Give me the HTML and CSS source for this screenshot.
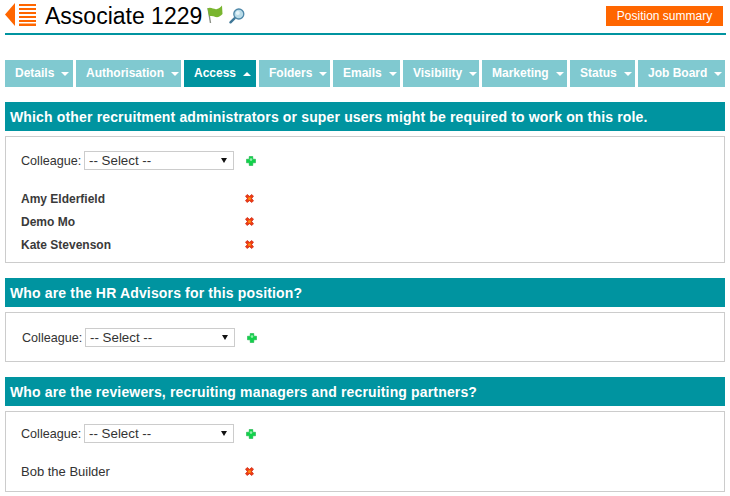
FILE: index.html
```html
<!DOCTYPE html>
<html lang="en">
<head>
<meta charset="utf-8">
<title>Associate 1229</title>
<link rel="stylesheet" href="styles.css">
</head>
<body>
<svg class="sprite" width="0" height="0">
  <symbol id="add" viewBox="0 0 10 10">
    <path d="M3.2 0.5h3.6v2.7h2.7v3.6h-2.7v2.7h-3.6v-2.7h-2.7v-3.6h2.7z" fill="#10d24a" stroke="#0aa83a" stroke-width="0.5"/>
    <circle cx="5" cy="3.6" r="1.3" fill="#8df0a8"/>
  </symbol>
  <symbol id="del" viewBox="0 0 10 10">
    <path d="M2.5 0.5L5 2.6L7.5 0.5L9.5 2.5L7.4 5L9.5 7.5L7.5 9.5L5 7.4L2.5 9.5L0.5 7.5L2.6 5L0.5 2.5Z" fill="#ee3d12" stroke="#c81c0c" stroke-width="0.7"/>
    <circle cx="5" cy="5" r="1.7" fill="#ff8a10"/>
  </symbol>
</svg>
<div class="page">
  <header class="head">
    <svg class="icon-back" width="32" height="24" viewBox="0 0 32 24">
      <path d="M10 0V23L0 11.5Z" fill="#ff6600"/>
      <g fill="#ff6600">
        <rect x="14" y="1" width="17" height="2"/>
        <rect x="14" y="5" width="17" height="2"/>
        <rect x="14" y="9" width="17" height="2"/>
        <rect x="14" y="13" width="17" height="2"/>
        <rect x="14" y="17" width="17" height="2"/>
        <rect x="14" y="20.5" width="17" height="2.5"/>
      </g>
    </svg>
    <h1 class="title">Associate 1229</h1>
    <svg class="icon-flag" width="17" height="19" viewBox="0 0 17 19">
      <path d="M2 3L4.5 18" stroke="#8a8f85" stroke-width="1.4" fill="none"/>
      <path d="M1.5 3.5C5 1.5 8 5 11 4C13 3.5 14.5 2.5 16 0.5L16.5 9C14.5 11.5 12 12.5 9.5 12C7.5 11.5 5.5 10.5 3.2 11.5Z" fill="#79b52f"/>
    </svg>
    <svg class="icon-search" width="16" height="16" viewBox="0 0 16 16">
      <circle cx="9.8" cy="6" r="5" fill="#b9dbe8" stroke="#4d87a8" stroke-width="1.3"/>
      <circle cx="8.8" cy="5" r="2" fill="#e4f3f8"/>
      <path d="M5.5 10.3L1.5 14.3" stroke="#3f7797" stroke-width="2.4" stroke-linecap="round"/>
    </svg>
    <a class="summary">Position summary</a>
  </header>

  <nav class="tabs">
    <a class="tab tab-details">Details<i class="caret"></i></a>
    <a class="tab tab-auth">Authorisation<i class="caret"></i></a>
    <a class="tab tab-access active">Access<i class="caret up"></i></a>
    <a class="tab tab-folders">Folders<i class="caret"></i></a>
    <a class="tab tab-emails">Emails<i class="caret"></i></a>
    <a class="tab tab-vis">Visibility<i class="caret"></i></a>
    <a class="tab tab-mkt">Marketing<i class="caret"></i></a>
    <a class="tab tab-status">Status<i class="caret"></i></a>
    <a class="tab tab-job">Job Board<i class="caret"></i></a>
  </nav>

  <section class="section">
    <h2 class="section-head">Which other recruitment administrators or super users might be required to work on this role.</h2>
    <div class="panel panel-first">
      <div class="field">
        <label class="label">Colleague:</label>
        <span class="select-wrap"><select class="select"><option>-- Select --</option></select></span>
        <svg class="icon-add" width="10" height="10"><use href="#add"/></svg>
      </div>
      <ul class="people">
        <li class="person"><span class="name">Amy Elderfield</span><svg class="icon-del" width="9" height="9"><use href="#del"/></svg></li>
        <li class="person"><span class="name">Demo Mo</span><svg class="icon-del" width="9" height="9"><use href="#del"/></svg></li>
        <li class="person"><span class="name">Kate Stevenson</span><svg class="icon-del" width="9" height="9"><use href="#del"/></svg></li>
      </ul>
    </div>
  </section>

  <section class="section">
    <h2 class="section-head">Who are the HR Advisors for this position?</h2>
    <div class="panel panel-second">
      <div class="field">
        <label class="label">Colleague:</label>
        <span class="select-wrap"><select class="select"><option>-- Select --</option></select></span>
        <svg class="icon-add" width="10" height="10"><use href="#add"/></svg>
      </div>
    </div>
  </section>

  <section class="section">
    <h2 class="section-head">Who are the reviewers, recruiting managers and recruiting partners?</h2>
    <div class="panel panel-third">
      <div class="field">
        <label class="label">Colleague:</label>
        <span class="select-wrap"><select class="select"><option>-- Select --</option></select></span>
        <svg class="icon-add" width="10" height="10"><use href="#add"/></svg>
      </div>
      <ul class="people">
        <li class="person"><span class="name name-plain">Bob the Builder</span><svg class="icon-del" width="9" height="9"><use href="#del"/></svg></li>
      </ul>
    </div>
  </section>
</div>
</body>
</html>
```

FILE: styles.css
```css
* { box-sizing: border-box; }
html, body { margin: 0; padding: 0; background: #fff; }
body { font-family: "Liberation Sans", Arial, sans-serif; color: #333; overflow: hidden; }
.sprite { display: block; height: 0; }
.page { width: 730px; padding: 0 5px; }

.head {
  display: flex;
  align-items: flex-start;
  height: 35px;
  width: 721px;
  padding-top: 3px;
  border-bottom: 2px solid #0094a0;
}
.icon-back { flex: none; }
.title {
  margin: 1px 0 0 8px;
  font-size: 23px;
  line-height: 24px;
  font-weight: normal;
  color: #000;
  white-space: nowrap;
}
.icon-flag { margin: 2px 0 0 4px; flex: none; }
.icon-search { margin: 5px 0 0 6px; flex: none; }
.summary {
  margin: 3px 3px 0 auto;
  width: 117px;
  height: 20px;
  background: #ff6600;
  color: #fff;
  font-size: 12px;
  line-height: 20px;
  text-align: center;
}

.tabs { display: flex; gap: 3px; margin-top: 25px; }
.tab {
  display: flex;
  align-items: center;
  height: 27px;
  padding: 0 0 2px 10px;
  background: #80c9d0;
  color: #fff;
  font-size: 12px;
  font-weight: bold;
  white-space: nowrap;
}
.tab.active { background: #0094a0; }
.tab-details { width: 68px; }
.tab-auth { width: 105px; }
.tab-access { width: 72px; }
.tab-folders { width: 71px; }
.tab-emails { width: 67px; }
.tab-vis { width: 76px; }
.tab-mkt { width: 85px; }
.tab-status { width: 65px; }
.tab-job { width: 87px; }
.caret {
  margin: 3px 0 0 7px;
  width: 0;
  height: 0;
  border-left: 4px solid transparent;
  border-right: 4px solid transparent;
  border-top: 4px solid #fff;
}
.caret.up { border-top: 0; border-bottom: 4px solid #fff; margin-top: 2px; }

.section { margin-top: 15px; width: 720px; }
.section-head {
  margin: 0;
  height: 29px;
  padding-left: 5px;
  background: #0094a0;
  color: #fff;
  font-size: 14px;
  letter-spacing: 0.155px;
  line-height: 30px;
  font-weight: bold;
  white-space: nowrap;
}
.panel {
  margin-top: 5px;
  border: 1px solid #ccc;
}
.panel-first { padding: 14px 15px 6px; }
.panel-second { padding: 15px 16px 14px; }
.panel-third { padding: 12px 15px 8px; }
.field { display: flex; align-items: center; height: 19px; }
.label { width: 63px; font-size: 12.6px; color: #333; white-space: nowrap; }
.select-wrap { position: relative; display: block; width: 150px; height: 19px; }
.select-wrap::after {
  content: "";
  position: absolute;
  right: 7px;
  top: 7px;
  border-left: 3px solid transparent;
  border-right: 3px solid transparent;
  border-top: 5px solid #111;
  pointer-events: none;
}
.select {
  display: block;
  width: 150px;
  height: 19px;
  padding: 0 0 0 4px;
  border: 1px solid #ccc;
  background: #fff;
  color: #333;
  font-family: "Liberation Sans", Arial, sans-serif;
  font-size: 13.33px;
  border-radius: 0;
  appearance: none;
}
.icon-add { margin-left: 12px; flex: none; }

.people { list-style: none; margin: 17px 0 0; padding: 0; }
.person { display: flex; align-items: center; height: 23px; }
.name { width: 224px; font-size: 12px; font-weight: bold; color: #3a3a3a; }
.name-plain { font-size: 13px; font-weight: normal; color: #333; }
.icon-del { flex: none; }
```
